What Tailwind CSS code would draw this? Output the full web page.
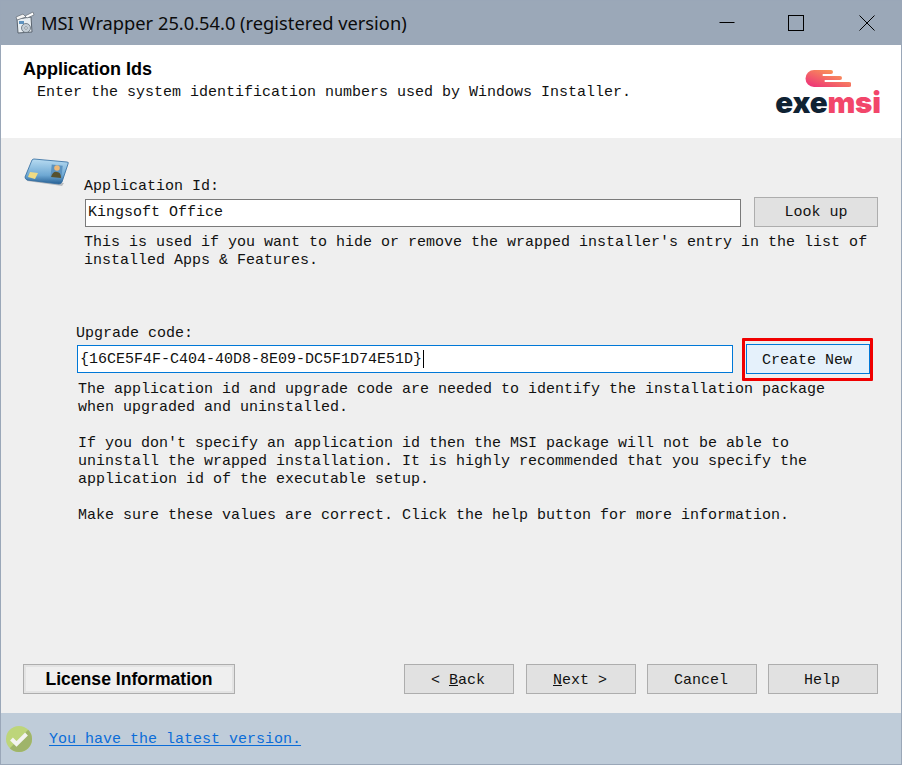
<!DOCTYPE html>
<html lang="en">
<head>
  <meta charset="UTF-8" />
  <meta name="viewport" content="width=device-width, initial-scale=1.0" />
  <title>MSI Wrapper</title>
  <script src="https://cdn.jsdelivr.net/npm/@tailwindcss/browser@4"></script>
</head>
<body class="bg-[#efefef]">
<div class="w-[902px] h-[765px] flex flex-col border border-[#9aa7b8] font-['Liberation_Mono',monospace] text-[15px] leading-[18px] text-[#111] overflow-hidden">

  <!-- Title bar -->
  <header class="h-[45px] shrink-0 bg-[#9ba8b8] flex items-center -mx-px -mt-px">
    <svg class="ml-[14px] w-[21px] h-[24px]" viewBox="0 0 21 24">
      <path d="M3 8 L17 6 L18 21 L4 22 Z" fill="#e8eef2" stroke="#59636e" stroke-width="1"/>
      <path d="M2 6 L9 3 L12 6 L3 9 Z" fill="#f3f3f3" stroke="#6d7680" stroke-width="0.8"/>
      <path d="M11 5 L19 1 L20 4 L13 7 Z" fill="#fff" stroke="#6d7680" stroke-width="0.8"/>
      <rect x="5" y="10" width="5" height="3" fill="#5f93bf"/>
      <circle cx="12" cy="17" r="4.5" fill="#c4ced6" stroke="#5f6b76" stroke-width="0.8"/>
      <circle cx="12" cy="17" r="1.3" fill="#fff" stroke="#5f6b76" stroke-width="0.6"/>
    </svg>
    <span class="ml-[6px] font-['Noto_Sans',sans-serif] text-[18.3px] text-[#0b0b0b]">MSI Wrapper 25.0.54.0 (registered version)</span>
    <div class="ml-auto flex items-center">
      <svg class="w-[16px] h-[16px] mr-[53px]" viewBox="0 0 16 16"><path d="M0.5 7.5 H15.5" stroke="#000" fill="none"/></svg>
      <svg class="w-[16px] h-[16px] mr-[55px]" viewBox="0 0 16 16"><rect x="0.5" y="0.5" width="15" height="15" stroke="#000" fill="none"/></svg>
      <svg class="w-[16px] h-[16px] mr-[27px]" viewBox="0 0 16 16"><path d="M0.5 0.5 L15.5 15.5 M15.5 0.5 L0.5 15.5" stroke="#000" fill="none"/></svg>
    </div>
  </header>

  <!-- Page heading -->
  <section class="h-[93px] shrink-0 bg-white flex justify-between pl-[22px] pr-[21px]">
    <div class="pt-[14px]">
      <h1 class="font-['Liberation_Sans',sans-serif] font-bold text-[18px] leading-[20px] text-black">Application Ids</h1>
      <p class="ml-[14px] mt-[5px] whitespace-pre">Enter the system identification numbers used by Windows Installer.</p>
    </div>
    <div class="flex flex-col items-center w-[104px] pt-[25px]">
      <svg class="w-[46px] h-[18px] ml-[-1px]" viewBox="0 0 46 18">
        <defs>
          <linearGradient id="swoosh" x1="0" y1="1" x2="1" y2="0">
            <stop offset="0" stop-color="#ec2a7c"/>
            <stop offset="1" stop-color="#fdb24c"/>
          </linearGradient>
        </defs>
        <path d="M9 0 H26 A2 2 0 0 1 26 4 H18 Q17 5 18 6 H35 A2 2 0 0 1 35 10 H20 Q19 11 20 12 H44 A2 2 0 0 1 44 17 H9 A8.5 8.5 0 0 1 9 0 Z" fill="url(#swoosh)"/>
      </svg>
      <div class="mt-[-1px] font-['Inter',sans-serif] font-black text-[29.5px] leading-[30px] tracking-[-0.2px]"><span class="text-[#0f2233]">exe</span><span class="text-[#f2466a]">msi</span></div>
    </div>
  </section>

  <!-- Form area -->
  <main class="flex-1 flex flex-col bg-[#efefef]">
    <div class="flex">
      <svg class="ml-[23px] mt-[18px] w-[46px] h-[32px] shrink-0" viewBox="0 0 46 32">
        <defs>
          <linearGradient id="card" x1="0" y1="0" x2="0" y2="1">
            <stop offset="0" stop-color="#b8dcf2"/>
            <stop offset="0.65" stop-color="#6ea8d3"/>
            <stop offset="1" stop-color="#255f94"/>
          </linearGradient>
        </defs>
        <path d="M3 25 L38 30 L40 27 L4 22 Z" fill="#b9bcbf"/>
        <path d="M10 3 L43 6 Q45 6 44 8 L38 26 Q37 28 35 28 L3 24 Q1 23 1 21 L8 4 Q9 3 10 3 Z" fill="url(#card)" stroke="#2f6a9e" stroke-width="0.8"/>
        <path d="M6 16 L14 17 L11 23 L4 21 Z" fill="#f0dc84"/>
        <rect x="27" y="9" width="11" height="13" fill="#5c93c0" transform="rotate(6 32 16)"/>
        <circle cx="33" cy="12" r="2.8" fill="#eeb877"/>
        <path d="M27 21 Q29 15 33 16 Q37 16 37 22 Z" fill="#57512f"/>
      </svg>
      <div class="ml-[14px] pt-[40px] w-[794px]">
        <label class="block">Application Id:</label>
        <div class="flex items-end mt-[1px]">
          <div class="ml-px w-[656px] h-[28px] bg-white border border-[#7a7a7a] pl-[2px] leading-[25px]">Kingsoft Office</div>
          <button class="ml-[13px] w-[124px] h-[30px] pt-[2px] bg-[#e1e1e1] border border-[#adadad]">Look up</button>
        </div>
        <p class="mt-[7px]">This is used if you want to hide or remove the wrapped installer's entry in the list of<br>installed Apps &amp; Features.</p>
      </div>
    </div>

    <div class="ml-[75px] mt-[55px]">
      <label class="block">Upgrade code:</label>
      <div class="flex items-center mt-[1px] relative">
        <div class="ml-px w-[656px] h-[28px] bg-white border border-[#0078d7] pl-[2px] leading-[25px] flex items-center">{16CE5F4F-C404-40D8-8E09-DC5F1D74E51D}<span class="w-px h-[18px] bg-black ml-[1px]"></span></div>
        <button class="ml-[13px] w-[124px] h-[30px] pt-[4px] pr-[2px] bg-[#e5f1fb] border border-[#0078d7]">Create New</button>
        <!-- red highlight drawn over the screenshot -->
        <div class="absolute left-[666px] top-[-6px] w-[131px] h-[43px] border-[3px] border-[#f00000] rounded-[1px]"></div>
      </div>
      <div class="ml-[2px] mt-[7px]">
        <p>The application id and upgrade code are needed to identify the installation package<br>when upgraded and uninstalled.</p>
        <p class="mt-[18px]">If you don't specify an application id then the MSI package will not be able to<br>uninstall the wrapped installation. It is highly recommended that you specify the<br>application id of the executable setup.</p>
        <p class="mt-[18px]">Make sure these values are correct. Click the help button for more information.</p>
      </div>
    </div>

    <!-- Wizard buttons -->
    <div class="mt-auto mb-[19px] flex items-center pl-[22px] pr-[23px]">
      <button class="w-[212px] h-[30px] bg-[#efefef] border border-[#adadad] shadow-[inset_0_0_0_2px_#e3e3e3] font-['Liberation_Sans',sans-serif] font-bold text-[17.6px] text-black">License Information</button>
      <button class="ml-auto w-[110px] h-[30px] pt-[4px] pr-[2px] bg-[#e1e1e1] border border-[#adadad]">&lt; <span class="underline">B</span>ack</button>
      <button class="ml-[12px] w-[110px] h-[30px] pt-[4px] pr-[2px] bg-[#e1e1e1] border border-[#adadad]"><span class="underline">N</span>ext &gt;</button>
      <button class="ml-[11px] w-[110px] h-[30px] pt-[4px] pr-[2px] bg-[#e1e1e1] border border-[#adadad]">Cancel</button>
      <button class="ml-[11px] w-[110px] h-[30px] pt-[4px] pr-[2px] bg-[#e1e1e1] border border-[#adadad]">Help</button>
    </div>
  </main>

  <!-- Status bar -->
  <footer class="h-[51px] shrink-0 bg-[#bfccd9] flex items-center">
    <svg class="ml-[5px] w-[26px] h-[26px]" viewBox="0 0 26 26">
      <circle cx="13" cy="13" r="13" fill="#bdd57a"/>
      <path d="M22.2 3.8 A13 13 0 0 1 3.8 22.2 Z" fill="#9fb46a"/>
      <path d="M5.5 13 L10.5 18 L20.5 8" stroke="#f3f3f0" stroke-width="4" fill="none"/>
    </svg>
    <a class="ml-[17px] mt-[2px] text-[#0b6cd8] underline underline-offset-2 whitespace-pre">You have the latest version.</a>
  </footer>
</div>
</body>
</html>
